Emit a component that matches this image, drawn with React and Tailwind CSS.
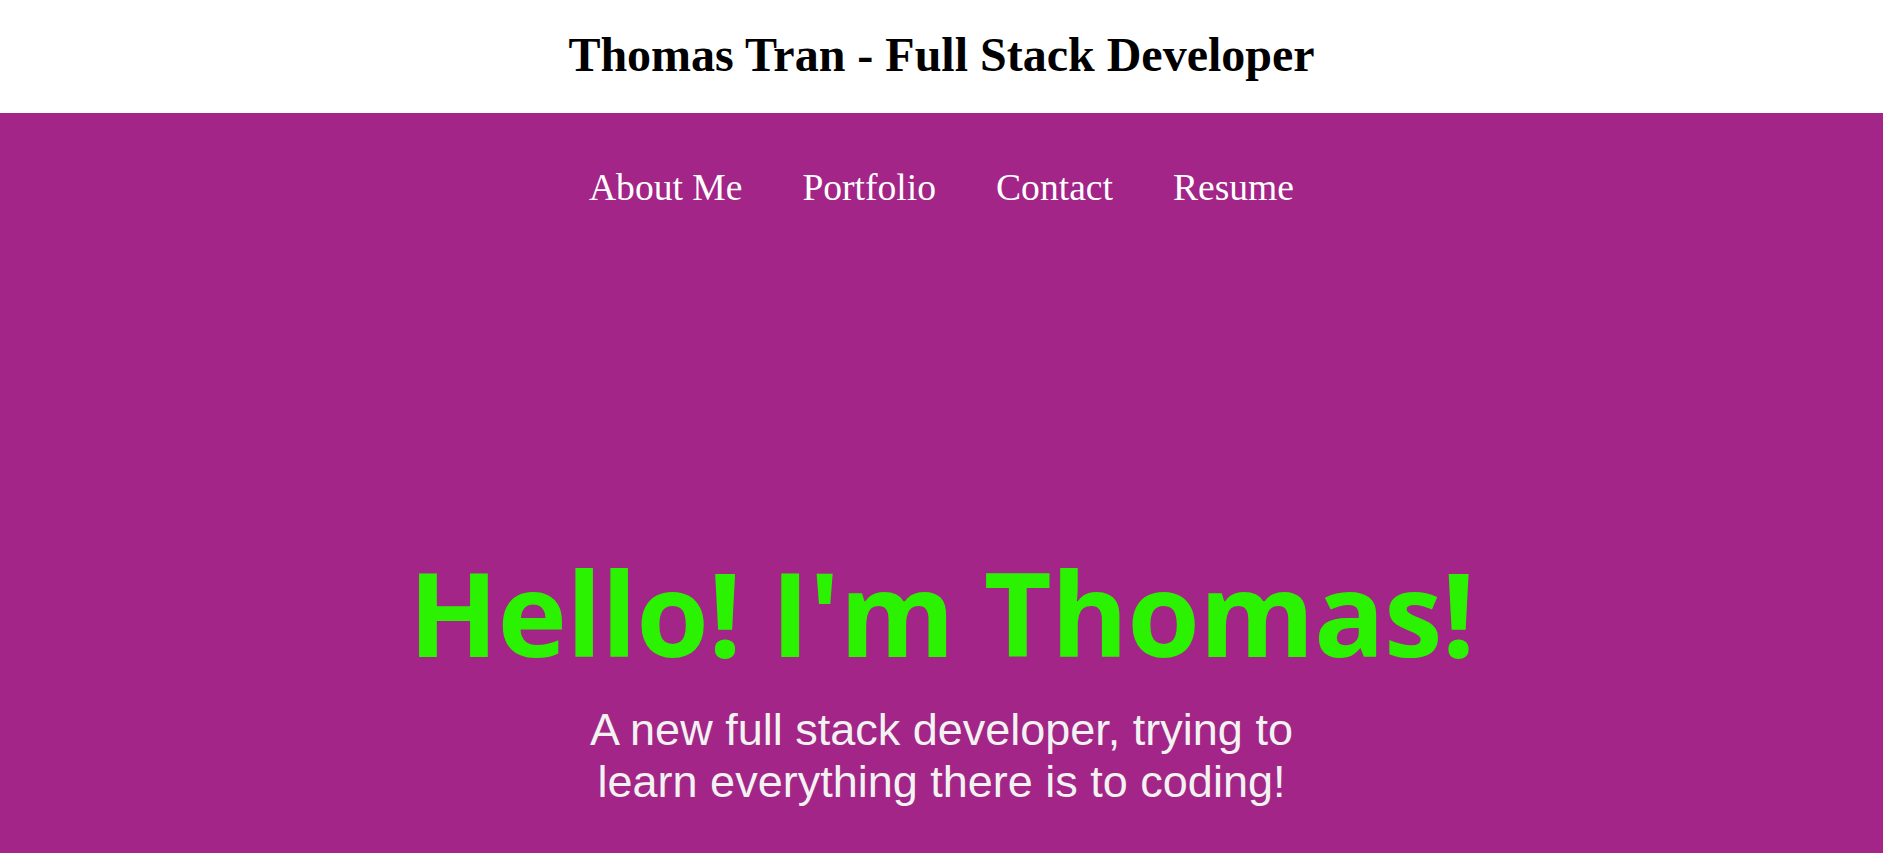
export default function App() {
  const links = ['About Me', 'Portfolio', 'Contact', 'Resume']

  return (
    <div className="min-h-screen flex flex-col bg-[#a22587]">
      <header className="h-[113px] bg-white flex items-center justify-center">
        <h1 className="text-[48px] font-bold leading-none text-black font-['Liberation_Serif',serif] mb-[3px]">
          Thomas Tran - Full Stack Developer
        </h1>
      </header>

      <main className="flex-1 flex flex-col items-center">
        <nav className="mt-[56px] flex gap-[60px] font-['Liberation_Serif',serif] text-[37.6px] leading-none text-white">
          {links.map((l) => (
            <a key={l} href="#" className="hover:underline">{l}</a>
          ))}
        </nav>

        <h2 className="mt-[346px] text-[117.5px] font-bold leading-none text-[#2af200] font-['Open_Sans',sans-serif] tracking-[-0.8px]">
          Hello! I'm Thomas!
        </h2>

        <p className="mt-[34px] max-w-[760px] text-center text-[45px] leading-[52px] text-[#f2f2f2] font-['Liberation_Sans',Arial,sans-serif]">
          A new full stack developer, trying to learn everything there is to coding!
        </p>
      </main>
    </div>
  )
}
